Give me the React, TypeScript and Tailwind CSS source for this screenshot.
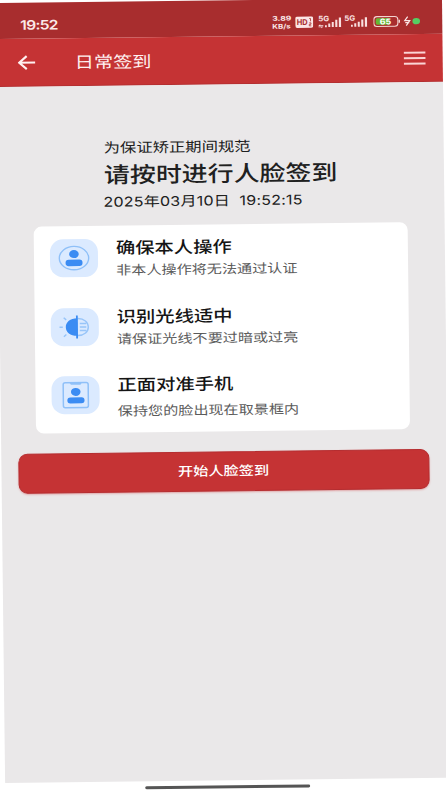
import type { ReactNode } from "react";

const tips = [
  { title: "确保本人操作", description: "非本人操作将无法通过认证", icon: <PersonIcon /> },
  { title: "识别光线适中", description: "请保证光线不要过暗或过亮", icon: <LightIcon /> },
  { title: "正面对准手机", description: "保持您的脸出现在取景框内", icon: <FrameIcon /> },
];

function PersonIcon() {
  return (
    <svg className="h-[38px] w-12" viewBox="0 0 48 38" fill="none">
      <ellipse cx="24" cy="19" rx="14.7" ry="11.7" stroke="#8fc0f8" strokeWidth="1.4" />
      <ellipse cx="24" cy="15" rx="4.8" ry="4" fill="#3b8cf3" />
      <rect x="15.5" y="20.5" width="17" height="6.5" rx="3.2" fill="#3b8cf3" />
    </svg>
  );
}

function LightIcon() {
  return (
    <svg className="h-[38px] w-12" viewBox="0 0 48 38" fill="none">
      <path d="M27 10.500c6.500 0 10.500 3.700 10.500 8.500S33.500 27.500 27 27.500M29 15.500h6.500M29 19h6.500M29 22.500h6.500" stroke="#98c5f9" strokeWidth="1.4" />
      <path d="M8.700 19h3.300M13 9.500l2.500 2.200M13 28.500l2.500-2.200" stroke="#98c5f9" strokeWidth="1.5" />
      <path d="M26.500 10.200C19.500 10.200 15 14 15 19s4.500 8.800 11.500 8.800Z" fill="#3b8cf3" />
      <path d="M26.200 7.500v23" stroke="#3b8cf3" strokeWidth="1.8" />
    </svg>
  );
}

function FrameIcon() {
  return (
    <svg className="h-[38px] w-12" viewBox="0 0 48 38" fill="none">
      <rect x="11.7" y="6.5" width="25" height="25" rx="2" stroke="#8fc0f8" strokeWidth="1.5" />
      <path d="M18 6.500h12.500l-1.500 2.200h-9.500Z" fill="#8fc0f8" />
      <ellipse cx="24.2" cy="15.8" rx="4.8" ry="4" fill="#3b8cf3" />
      <rect x="15.7" y="21.3" width="17.2" height="6" rx="3" fill="#3b8cf3" />
    </svg>
  );
}

function Signal({ withArrows = false }: { withArrows?: boolean }) {
  return (
    <svg className="h-3.5 w-[26px]" viewBox="0 0 26 14" fill="#f9e0e0">
      <text x="0" y="6" fontSize="7.5" fontWeight="700" textLength="11" lengthAdjust="spacingAndGlyphs">
        5G
      </text>
      {withArrows && <path d="M0 10.500l2-1.500v1h3v1H0ZM5 11.500l-2 1.500v-1H0v-.5Z" />}
      <rect x="6.7" y="10" width="1.8" height="2" />
      <rect x="10" y="8.5" width="2" height="3.5" />
      <rect x="13.5" y="7" width="2" height="5" />
      <rect x="17" y="4.8" width="2.1" height="7.2" />
      <rect x="20.6" y="2.5" width="2.2" height="9.5" />
    </svg>
  );
}

function StatusBar() {
  return (
    <div className="flex h-9 items-center bg-[#a82d2e] pt-[10px] pr-[21px] pl-6 text-[#fbe9e9]">
      <Wide className="text-[13px] font-semibold tracking-[-0.6px]">19:52</Wide>
      <div className="ml-auto flex h-4 items-center">
        <div className="h-4 w-[23px] text-[6.4px] leading-[8px] font-bold">
          <span className="block w-max origin-left scale-x-[1.35]">3.89</span>
          <span className="block w-max origin-left scale-x-[1.24]">KB/s</span>
        </div>
        <svg className="mr-[5px] h-3 w-[18px]" viewBox="0 0 18 12">
          <rect width="18" height="11.5" rx="2" fill="#fbe6e6" />
          <text x="1.5" y="8.5" fontSize="8" fontWeight="700" fill="#a82d2e" textLength="11" lengthAdjust="spacingAndGlyphs">
            HD
          </text>
          <path d="M14 2.200h1.300V5M14 6.500h1.700v1.500H14v1.500h2" fill="none" stroke="#a82d2e" strokeWidth=".8" />
        </svg>
        <Signal withArrows />
        <Signal />
        <svg className="ml-[3px] h-3 w-[28px]" viewBox="0 0 28 12">
          <rect x=".6" y="1.1" width="24" height="9.8" rx="3" fill="none" stroke="#f3d3d0" strokeWidth="1.1" />
          <path d="M4 2.700h12v6.600H4a1.500 1.500 0 0 1-1.500-1.500V4.200A1.500 1.500 0 0 1 4 2.700Z" fill="#65b832" />
          <path d="M26 4.500v3" stroke="#f3d3d0" strokeWidth="1.5" />
          <text x="6.5" y="9" fontSize="8" fontWeight="700" fill="#fff" textLength="11.5" lengthAdjust="spacingAndGlyphs">
            65
          </text>
        </svg>
        <svg className="ml-0.5 h-3 w-[18px]" viewBox="0 0 18 12">
          <path d="M4.500 1.500 1.500 5.500h5l-3.500 5M2 7.500h4" fill="none" stroke="#fbe6e6" strokeWidth="1.2" />
          <ellipse cx="13" cy="6" rx="3.8" ry="3.2" fill="#55cd62" />
        </svg>
      </div>
    </div>
  );
}

// The phone's type runs wide, so every line is stretched from its left edge
function Wide({ className, children }: { className: string; children: ReactNode }) {
  return <span className={`block w-max origin-left scale-x-[1.2] whitespace-pre ${className}`}>{children}</span>;
}

export default function App() {
  return (
    <main className="h-[794px] w-[446px] overflow-hidden bg-white font-['Inter','Noto_Sans_CJK_SC',sans-serif]">
      <div className="mt-[3px] -ml-1 flex h-[791px] w-[446px] origin-top-left rotate-[-0.67deg] flex-col">
        <StatusBar />
        <header className="flex h-12 shrink-0 items-center border-b border-[#b32f31] bg-[#c53334] pr-[17px] pl-[21px] text-[#fff0f0]">
          <svg className="h-4 w-[18px]" viewBox="0 0 18 16" fill="none" stroke="currentColor" strokeWidth="2.1">
            <path d="M17.500 8H1.500M9 1.500 1.500 8 9 14.500" />
          </svg>
          <h1 className="ml-[39px]">
            <Wide className="text-[16px]">日常签到</Wide>
          </h1>
          <svg className="ml-auto h-[14px] w-[22px]" viewBox="0 0 22 14" stroke="#fbd5d5" strokeWidth="2">
            <path d="M0 1.500h22M0 7h22M0 12.500h22" />
          </svg>
        </header>

        <section className="h-[696px] shrink-0 bg-[#eae8e9] pt-[52px]">
          <div className="h-[88px] pl-[106px] text-[#202020]">
            <Wide className="text-[13.6px] leading-5">为保证矫正期间规范</Wide>
            <Wide className="text-[21.6px] leading-[35px] font-medium">请按时进行人脸签到</Wide>
            <Wide className="-ml-px pt-px text-[13.4px] leading-[17px] tracking-[0.17px]">2025年03月10日  19:52:15</Wide>
          </div>

          <ul className="ml-[35px] h-[207px] w-[374px] rounded-lg bg-white pt-[13px] pl-4">
            {tips.map((tip) => (
              <li key={tip.title} className="flex h-[68.5px] last:[&_p]:pt-1">
                <div className="h-[38px] w-12 rounded-[13px] bg-[#dbeaff]">{tip.icon}</div>
                <div className="ml-[17.5px] -mt-[3px]">
                  <h2>
                    <Wide className="text-[16.1px] leading-6 font-medium text-[#151515]">{tip.title}</Wide>
                  </h2>
                  <p>
                    <Wide className="text-[12.6px] leading-[21px] text-[#5b5b5b]">{tip.description}</Wide>
                  </p>
                </div>
              </li>
            ))}
          </ul>

          <button className="mt-5 ml-[17px] flex h-10 w-[411px] items-center justify-center rounded-[9px] border border-[#b52d30] bg-[#c53334] text-white shadow-[0_1px_2px_#e0a5a7]">
            <span className="block scale-x-[1.2] text-[12.7px] font-medium">开始人脸签到</span>
          </button>
        </section>
        <div className="mt-[5px] ml-[140px] h-[3px] w-[165px] shrink-0 rounded-full bg-[#555]" />
      </div>
    </main>
  );
}
